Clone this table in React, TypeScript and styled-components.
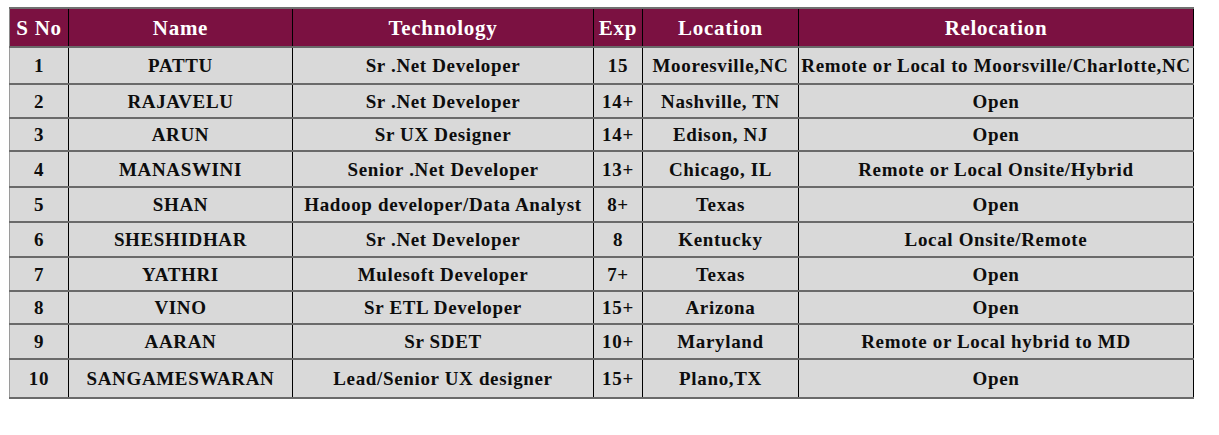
import styled, { createGlobalStyle } from "styled-components";

const GlobalStyle = createGlobalStyle`
  body {
    margin: 0;
    background: #ffffff;
    font-family: "Liberation Serif", "Times New Roman", serif;
  }
`;

const Page = styled.div`
  padding: 7px 0 0 9px;
`;

const Table = styled.table`
  width: 1184px;
  table-layout: fixed;
  border-collapse: collapse;
  font-family: "Liberation Serif", "Times New Roman", serif;
  font-weight: bold;
`;

const Row = styled.tr<{ $h: number }>`
  height: ${(p) => p.$h}px;
`;

const HeadCell = styled.th`
  background: #7b1141;
  color: #ffffff;
  font-size: 21px;
  letter-spacing: 0.7px;
  text-align: center;
  vertical-align: middle;
  padding: 1px 0 0;
  border-top: 2px solid #707070;
  border-bottom: 2px solid #6a6a6a;
  border-left: 1px solid #000000;
  border-right: 1px solid #000000;
  &:first-child {
    border-left: 1px solid #8a8a8a;
  }
`;

const Cell = styled.td`
  background: #d9d9d9;
  color: #0d0d0d;
  font-size: 19px;
  letter-spacing: 0.65px;
  text-align: center;
  vertical-align: middle;
  white-space: nowrap;
  padding: 1px 0 0;
  border-bottom: 2px solid #6a6a6a;
  border-left: 1px solid #000000;
  border-right: 1px solid #000000;
  &:first-child {
    border-left: 1px solid #9a9a9a;
  }
`;

const columns = [
  { title: "S No", width: 59 },
  { title: "Name", width: 224 },
  { title: "Technology", width: 301 },
  { title: "Exp", width: 49 },
  { title: "Location", width: 156 },
  { title: "Relocation", width: 395 },
];

const rows = [
  { h: 37, name: "PATTU", tech: "Sr .Net Developer", exp: "15", loc: "Mooresville,NC", rel: "Remote or Local to Moorsville/Charlotte,NC" },
  { h: 34, name: "RAJAVELU", tech: "Sr .Net Developer", exp: "14+", loc: "Nashville, TN", rel: "Open" },
  { h: 33, name: "ARUN", tech: "Sr UX Designer", exp: "14+", loc: "Edison, NJ", rel: "Open" },
  { h: 36, name: "MANASWINI", tech: "Senior .Net Developer", exp: "13+", loc: "Chicago, IL", rel: "Remote or Local Onsite/Hybrid" },
  { h: 35, name: "SHAN", tech: "Hadoop developer/Data Analyst", exp: "8+", loc: "Texas", rel: "Open" },
  { h: 35, name: "SHESHIDHAR", tech: "Sr .Net Developer", exp: "8", loc: "Kentucky", rel: "Local Onsite/Remote" },
  { h: 34, name: "YATHRI", tech: "Mulesoft Developer", exp: "7+", loc: "Texas", rel: "Open" },
  { h: 33, name: "VINO", tech: "Sr ETL Developer", exp: "15+", loc: "Arizona", rel: "Open" },
  { h: 35, name: "AARAN", tech: "Sr SDET", exp: "10+", loc: "Maryland", rel: "Remote or Local hybrid to MD" },
  { h: 39, name: "SANGAMESWARAN", tech: "Lead/Senior UX designer", exp: "15+", loc: "Plano,TX", rel: "Open" },
];

const App = () => {
  return (
    <Page>
      <GlobalStyle />
      <Table>
        <colgroup>
          {columns.map((c) => (
            <col key={c.title} style={{ width: c.width }} />
          ))}
        </colgroup>
        <thead>
          <Row $h={39}>
            {columns.map((c) => (
              <HeadCell key={c.title}>{c.title}</HeadCell>
            ))}
          </Row>
        </thead>
        <tbody>
          {rows.map((r, i) => (
            <Row key={r.name} $h={r.h}>
              <Cell>{i + 1}</Cell>
              <Cell>{r.name}</Cell>
              <Cell>{r.tech}</Cell>
              <Cell>{r.exp}</Cell>
              <Cell>{r.loc}</Cell>
              <Cell>{r.rel}</Cell>
            </Row>
          ))}
        </tbody>
      </Table>
    </Page>
  );
};

export default App;
